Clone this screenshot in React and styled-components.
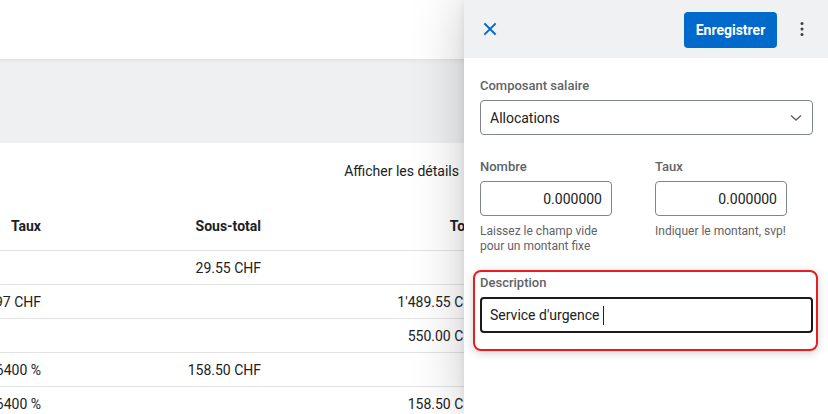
import React from "react";
import styled, { createGlobalStyle } from "styled-components";

const Global = createGlobalStyle`
  html, body { margin: 0; padding: 0; }
  body {
    width: 828px; height: 414px; overflow: hidden; background: #fff;
    font-family: Roboto, "Liberation Sans", Arial, sans-serif;
    color: #202124;
  }
  * { box-sizing: border-box; }
`;

const Screen = styled.div`
  display: flex;
  width: 828px;
  height: 414px;
  overflow: hidden;
`;

const Main = styled.div`
  flex: 0 0 464px;
  display: flex;
  flex-direction: column;
  overflow: hidden;
  background: #fff;
  & > * { flex-shrink: 0; }
`;

const TopBar = styled.div`
  height: 59px;
  background: #fff;
`;

const Band = styled.div`
  height: 84px;
  background: #eff0f2;
  box-shadow: inset 0 4px 5px -3px rgba(0, 0, 0, 0.08);
`;

const DetailsRow = styled.div`
  height: 56px;
  display: flex;
  align-items: center;
  justify-content: flex-end;
  padding-right: 5px;
  font-size: 14px;
  color: #202124;
`;

const Table = styled.div`
  display: flex;
  flex-direction: column;
  margin-left: -100px;
  width: 600px;
  & > * { flex-shrink: 0; }
`;

const Row = styled.div`
  display: grid;
  grid-template-columns: 141px 220px 220px;
  height: ${(p) => (p.$head ? "51px" : "34px")};
  align-items: center;
  border-top: ${(p) => (p.$head ? "none" : "1px solid #e2e3e5")};
  font-size: 14px;
  font-weight: ${(p) => (p.$head ? 700 : 400)};
  color: #202124;
  padding-top: ${(p) => (p.$head ? "2px" : "0")};
`;

const Cell = styled.div`
  text-align: right;
  white-space: nowrap;
  direction: rtl;
  unicode-bidi: plaintext;
`;

const Panel = styled.aside`
  flex: 0 0 364px;
  display: flex;
  flex-direction: column;
  background: #fff;
  box-shadow: 0 0 50px rgba(0, 0, 0, 0.22), 0 0 8px rgba(0, 0, 0, 0.08);
  position: relative;
  z-index: 1;
`;

const PanelHeader = styled.div`
  height: 58px;
  flex-shrink: 0;
  background: #f0f1f3;
  display: flex;
  align-items: center;
  padding: 0 14px 0 12px;
`;

const IconButton = styled.button`
  width: ${(p) => p.$w || 28}px;
  height: 28px;
  border: none;
  background: transparent;
  padding: 0;
  display: flex;
  align-items: center;
  justify-content: center;
  cursor: pointer;
`;

const Spacer = styled.div`
  flex: 1;
`;

const SaveButton = styled.button`
  width: 93px;
  height: 36px;
  border: none;
  border-radius: 4px;
  background: #0069cc;
  color: #fff;
  font-family: Roboto, "Liberation Sans", Arial, sans-serif;
  font-size: 14px;
  font-weight: 700;
  margin-right: 13px;
  margin-top: 1px;
`;

const Body = styled.div`
  display: flex;
  flex-direction: column;
  padding: 19px 15px 0 16px;
`;

const Label = styled.div`
  font-size: 13px;
  font-weight: 500;
  line-height: 18px;
  color: #5f6368;
  margin-bottom: ${(p) => p.$mb ?? 5}px;
`;

const Select = styled.div`
  height: 35px;
  border: 1px solid #80868b;
  border-radius: 4px;
  display: flex;
  align-items: center;
  justify-content: space-between;
  padding: 0 10px 0 9px;
  font-size: 14px;
  color: #202124;
`;

const Columns = styled.div`
  display: grid;
  grid-template-columns: 1fr 1fr;
  column-gap: 17px;
  margin-top: 23px;
`;

const Field = styled.div`
  display: flex;
  flex-direction: column;
`;

const NumberBox = styled.div`
  width: 132px;
  height: 35px;
  border: 1px solid #80868b;
  border-radius: 4px;
  display: flex;
  align-items: center;
  justify-content: flex-end;
  padding-right: 9px;
  font-size: 14px;
  color: #202124;
`;

const Help = styled.div`
  margin-top: 8px;
  font-size: 12px;
  line-height: 15px;
  color: #5f6368;
`;

const Highlight = styled.div`
  margin: 16px -5px 0 -7px;
  border: 2px solid #ec1b1f;
  border-radius: 8px;
  padding: 2px 3px 16px 5px;
  box-shadow: 0 2px 10px rgba(0, 0, 0, 0.18);
`;

const TextBox = styled.div`
  height: 36px;
  border: 2px solid #1b1b1b;
  border-radius: 4px;
  display: flex;
  align-items: center;
  padding-left: 8px;
  font-size: 14px;
  color: #202124;
`;

const Caret = styled.span`
  display: inline-block;
  width: 1px;
  height: 19px;
  background: #202124;
  margin-left: 4px;
`;

const rows = [
  ["", "29.55 CHF", ""],
  ["1.0000 x 14.8997 CHF", "", "1'489.55 CHF"],
  ["", "", "550.00 CHF"],
  ["3.5400 x 5.6400 %", "158.50 CHF", ""],
  ["3.5400 x 5.6400 %", "", "158.50 CHF"],
];

export default function App() {
  return (
    <>
      <Global />
      <Screen>
        <Main>
          <TopBar />
          <Band />
          <DetailsRow>Afficher les détails</DetailsRow>
          <Table>
            <Row $head>
              <Cell>Taux</Cell>
              <Cell>Sous-total</Cell>
              <Cell>Total</Cell>
            </Row>
            {rows.map((r, i) => (
              <Row key={i}>
                {r.map((c, j) => (
                  <Cell key={j}>{c}</Cell>
                ))}
              </Row>
            ))}
          </Table>
        </Main>
        <Panel>
          <PanelHeader>
            <IconButton aria-label="Fermer">
              <svg width="14" height="14" viewBox="0 0 14 14">
                <path d="M2 2 L12 12 M12 2 L2 12" stroke="#0069cc" strokeWidth="1.9" strokeLinecap="square" fill="none" />
              </svg>
            </IconButton>
            <Spacer />
            <SaveButton>Enregistrer</SaveButton>
            <IconButton $w={24} aria-label="Plus">
              <svg width="6" height="16" viewBox="0 0 6 16">
                <circle cx="3" cy="2.5" r="1.5" fill="#3c4043" />
                <circle cx="3" cy="8" r="1.5" fill="#3c4043" />
                <circle cx="3" cy="13.5" r="1.5" fill="#3c4043" />
              </svg>
            </IconButton>
          </PanelHeader>
          <Body>
            <Label>Composant salaire</Label>
            <Select>
              <span>Allocations</span>
              <svg width="12" height="8" viewBox="0 0 12 8">
                <path d="M1 1.5 L6 6 L11 1.5" stroke="#5f6368" strokeWidth="1.5" fill="none" />
              </svg>
            </Select>
            <Columns>
              <Field>
                <Label>Nombre</Label>
                <NumberBox>0.000000</NumberBox>
                <Help>
                  Laissez le champ vide
                  <br />
                  pour un montant fixe
                </Help>
              </Field>
              <Field>
                <Label>Taux</Label>
                <NumberBox>0.000000</NumberBox>
                <Help>Indiquer le montant, svp!</Help>
              </Field>
            </Columns>
            <Highlight>
              <Label $mb={5}>Description</Label>
              <TextBox>
                Service d'urgence
                <Caret />
              </TextBox>
            </Highlight>
          </Body>
        </Panel>
      </Screen>
    </>
  );
}
